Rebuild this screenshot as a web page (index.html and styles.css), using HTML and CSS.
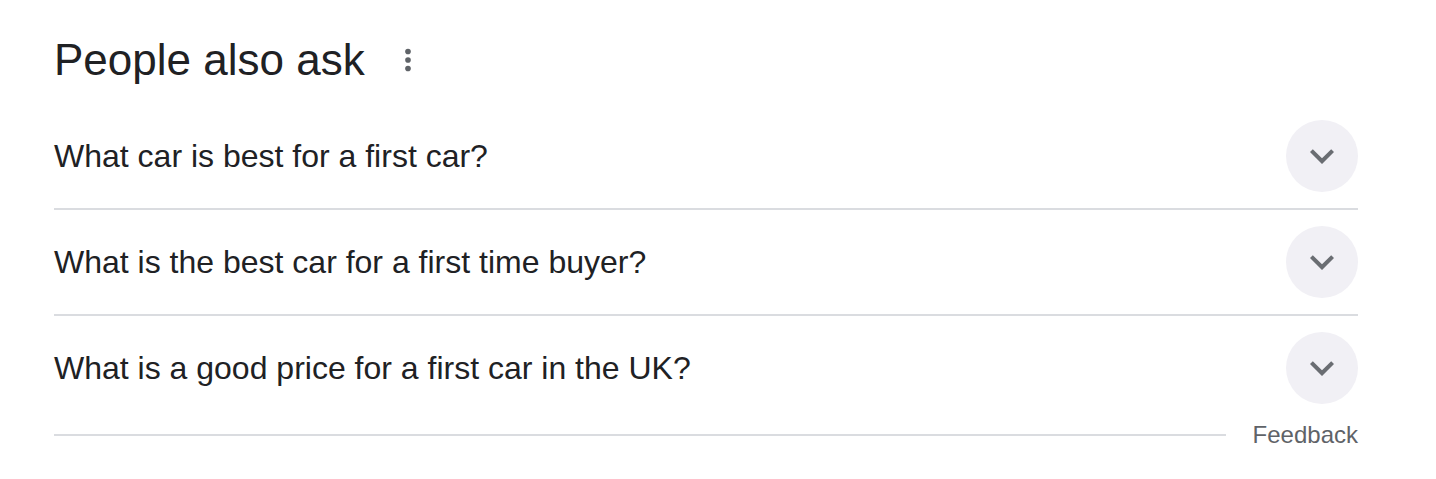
FILE: index.html
```html
<!DOCTYPE html>
<html lang="en">
<head>
<meta charset="utf-8">
<title>People also ask</title>
<link rel="stylesheet" href="styles.css">
</head>
<body>
<section class="paa">
  <div class="paa-head">
    <h2 class="paa-title">People also ask</h2>
    <svg class="more" viewBox="0 0 24 24" width="34" height="34" aria-hidden="true">
      <circle cx="12" cy="6" r="2"/>
      <circle cx="12" cy="12" r="2"/>
      <circle cx="12" cy="18" r="2"/>
    </svg>
  </div>
  <div class="q-list">
    <div class="q-row">
      <span class="q-text">What car is best for a first car?</span>
      <span class="q-btn"><svg viewBox="0 0 24 24" width="48" height="48" aria-hidden="true"><path d="M16.59 8.59L12 13.17 7.41 8.59 6 10l6 6 6-6z"/></svg></span>
    </div>
    <div class="q-row">
      <span class="q-text">What is the best car for a first time buyer?</span>
      <span class="q-btn"><svg viewBox="0 0 24 24" width="48" height="48" aria-hidden="true"><path d="M16.59 8.59L12 13.17 7.41 8.59 6 10l6 6 6-6z"/></svg></span>
    </div>
    <div class="q-row">
      <span class="q-text">What is a good price for a first car in the UK?</span>
      <span class="q-btn"><svg viewBox="0 0 24 24" width="48" height="48" aria-hidden="true"><path d="M16.59 8.59L12 13.17 7.41 8.59 6 10l6 6 6-6z"/></svg></span>
    </div>
  </div>
  <div class="paa-foot">
    <span class="foot-line"></span>
    <span class="feedback">Feedback</span>
  </div>
</section>
</body>
</html>
```

FILE: styles.css
```css
html, body {
  margin: 0;
  padding: 0;
  background: #ffffff;
}

body {
  font-family: "Liberation Sans", Arial, sans-serif;
  color: #202124;
}

.paa {
  padding: 32px 78px 0 54px;
}

.paa-head {
  display: flex;
  align-items: center;
  margin-bottom: 16px;
}

.paa-title {
  margin: 0;
  font-size: 44px;
  line-height: 56px;
  font-weight: 400;
  color: #202124;
}

.more {
  margin-left: 26px;
  fill: #5f6368;
}

.q-row {
  display: flex;
  align-items: center;
  justify-content: space-between;
  height: 104px;
  border-bottom: 2px solid #dadce0;
}

.q-row:last-child {
  border-bottom: none;
}

.q-text {
  font-size: 32px;
  line-height: 40px;
}

.q-btn {
  width: 72px;
  height: 72px;
  border-radius: 50%;
  background: #f1f0f5;
  display: flex;
  align-items: center;
  justify-content: center;
  flex-shrink: 0;
}

.q-btn svg {
  fill: #6a6d72;
}

.paa-foot {
  display: flex;
  align-items: center;
}

.foot-line {
  flex: 1;
  height: 2px;
  background: #dadce0;
}

.feedback {
  margin-left: 27px;
  font-size: 24px;
  line-height: 30px;
  color: #5f6368;
}
```
